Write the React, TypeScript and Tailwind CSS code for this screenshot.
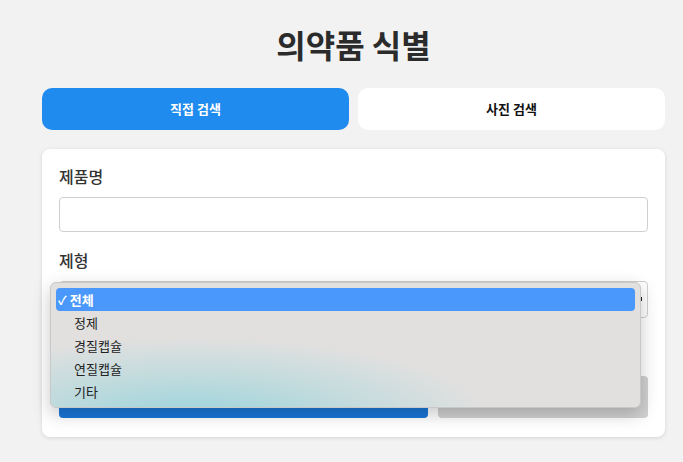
import { useState } from 'react';

const shapes = ['전체', '정제', '경질캡슐', '연질캡슐', '기타'];

export default function App() {
  const [tab, setTab] = useState<'direct' | 'photo'>('direct');
  const [selected] = useState('전체');

  return (
    <div className="relative min-h-[462px] w-full bg-[#f2f2f2] font-['Noto_Sans_CJK_KR','Noto_Sans',sans-serif] text-[#222]">
      <div className="ml-[42px] w-[623px] pt-[20px]">
        <h1 className="text-center text-[32px] font-bold leading-[48px] text-[#2b2b2b]">의약품 식별</h1>

        <div className="mt-[20px] grid grid-cols-2 gap-[9px]">
          <button
            onClick={() => setTab('direct')}
            className="h-[42px] rounded-[10px] bg-[#1f8bef] text-[13px] font-bold text-white"
          >
            직접 검색
          </button>
          <button
            onClick={() => setTab('photo')}
            className="h-[42px] rounded-[10px] bg-white text-[13px] font-bold text-[#111]"
          >
            사진 검색
          </button>
        </div>

        <div className="mt-[19px] rounded-[8px] bg-white px-[17px] pb-[19px] pt-[15px] shadow-[0_1px_4px_rgba(0,0,0,0.12)]">
          <label className="block text-[16px] font-medium leading-[24px] text-[#333]">제품명</label>
          <input className="mt-[9px] block h-[35px] w-full rounded-[4px] border border-[#cfcfcf] bg-white px-2 outline-none" />

          <label className="mt-[16px] block text-[16px] font-medium leading-[24px] text-[#333]">제형</label>
          <div className="relative mt-[9px] h-[37px] w-full rounded-[4px] border border-[#cfcfcf] bg-white">
            <span className="absolute right-[5px] top-[15px] h-[4px] w-[2px] bg-[#222]" />
          </div>

          <div className="mt-[58px] flex gap-[10px]">
            <button className="h-[42px] w-[369px] rounded-[4px] bg-[#1a76d8]" />
            <button className="h-[42px] flex-1 rounded-[4px] bg-[#d1d1d1]" />
          </div>
        </div>
      </div>

      {/* native select popup */}
      <div className="absolute left-[50px] top-[282px] h-[126px] w-[591px] overflow-hidden rounded-[6px] border border-[#c8c8c8] bg-[#e1e0df] shadow-[0_6px_18px_rgba(0,0,0,0.22)]">
        <div className="pointer-events-none absolute inset-0 bg-[radial-gradient(ellipse_300px_80px_at_140px_135px,rgba(150,212,220,0.95),rgba(170,215,220,0.55)_55%,transparent_100%)]" />
        <ul className="relative px-[5px] pt-[5px] text-[13px] leading-[23px]">
          {shapes.map((s) => (
            <li
              key={s}
              className={
                s === selected
                  ? 'flex h-[23px] items-center rounded-[4px] bg-[#4a98fb] pl-[2px] font-semibold text-white'
                  : 'flex h-[23px] items-center pl-[18px] text-[#222]'
              }
            >
              {s === selected && <span className="mr-[3px] text-[12px]">✓</span>}
              {s}
            </li>
          ))}
        </ul>
      </div>
      <span className="hidden">{tab}</span>
    </div>
  );
}
